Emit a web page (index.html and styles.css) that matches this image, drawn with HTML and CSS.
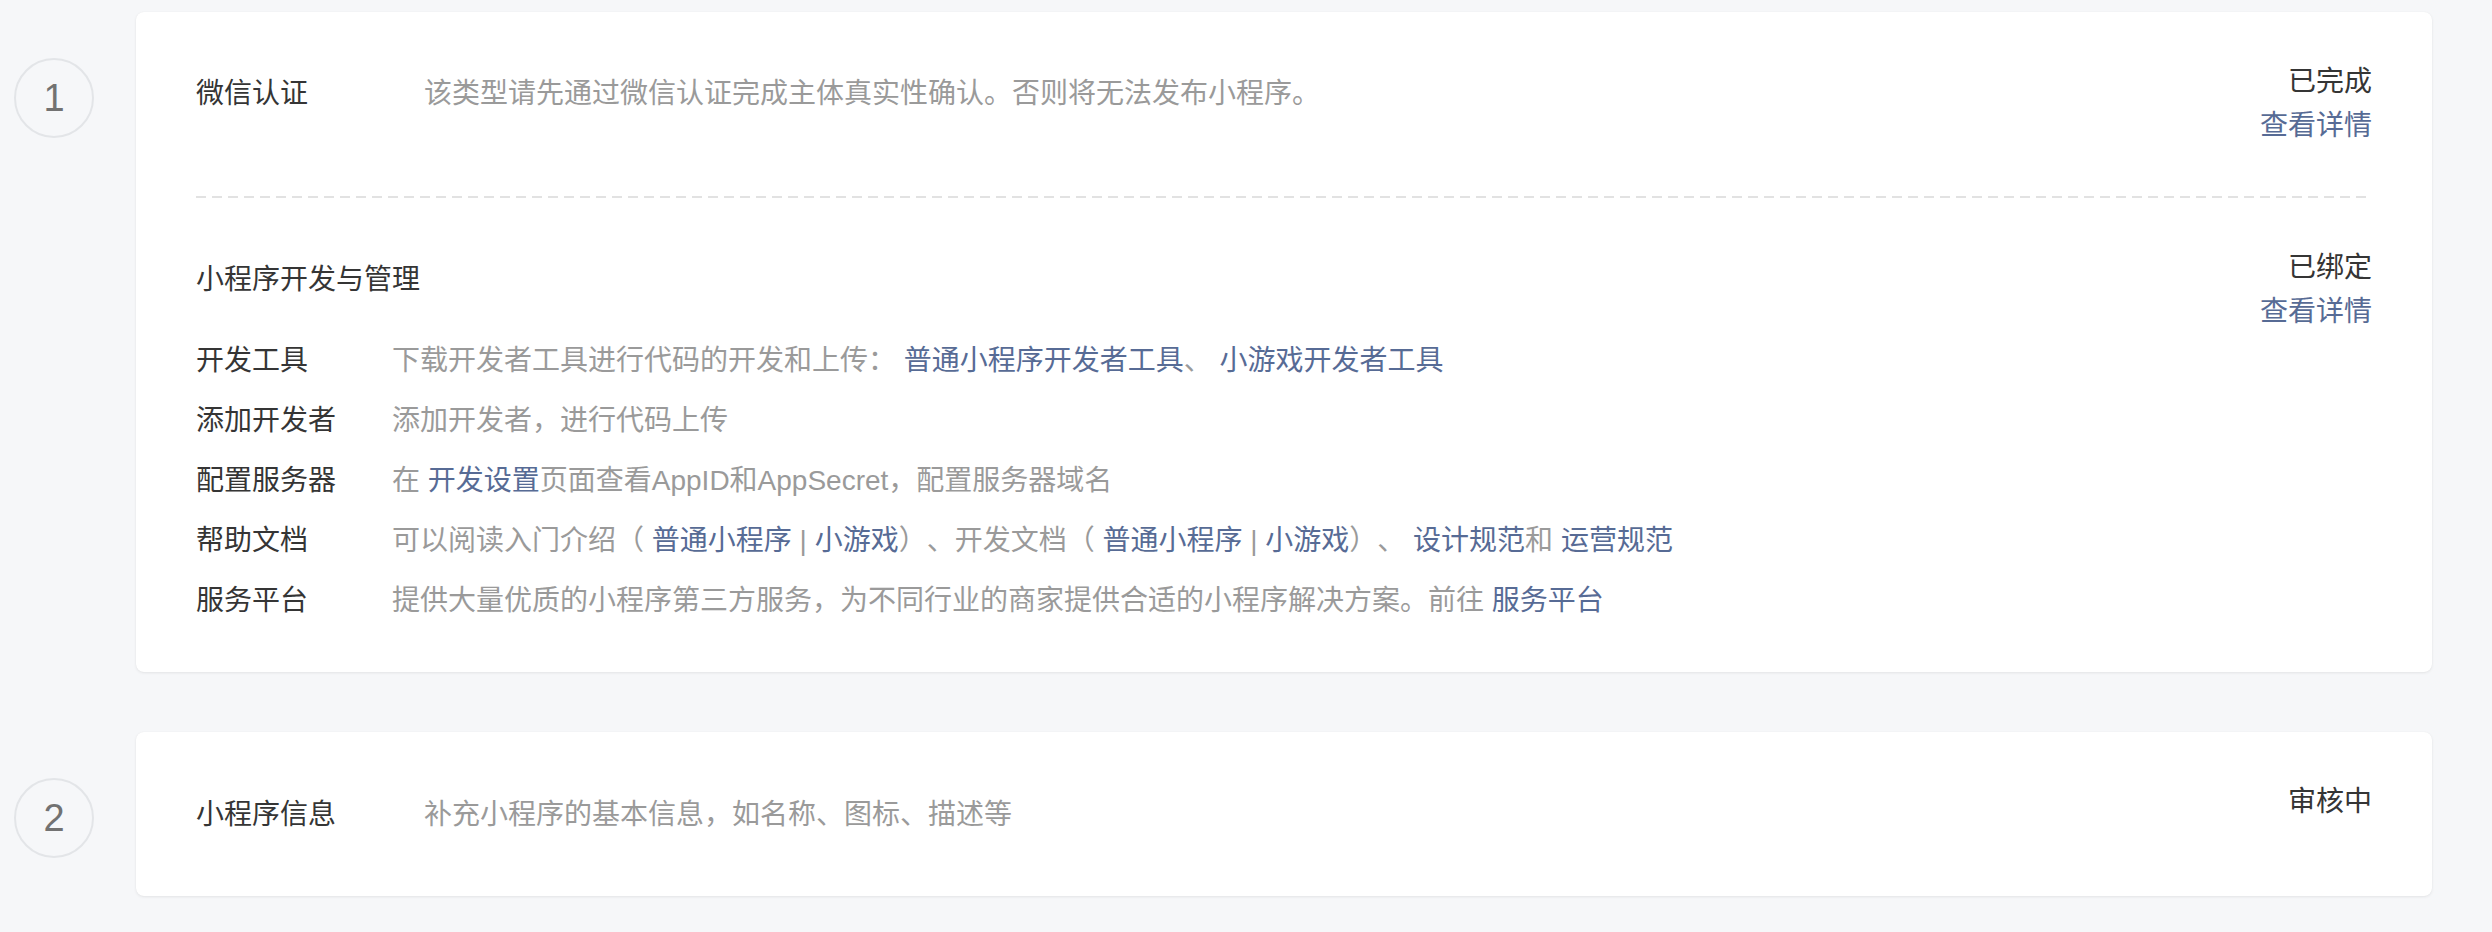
FILE: index.html
```html
<!DOCTYPE html>
<html lang="zh-CN">
<head>
<meta charset="utf-8">
<title>小程序发布流程</title>
<link rel="stylesheet" href="styles.css">
</head>
<body>
<div class="page">
  <div class="step">
    <div class="step-num">1</div>
    <div class="card">
      <div class="section">
        <div class="sec-head">
          <div class="sec-title">微信认证</div>
          <div class="sec-desc">该类型请先通过微信认证完成主体真实性确认。否则将无法发布小程序。</div>
          <div class="sec-status">
            <div class="status">已完成</div>
            <a class="link">查看详情</a>
          </div>
        </div>
      </div>
      <div class="divider"></div>
      <div class="section">
        <div class="sec-head">
          <div class="sec-title">小程序开发与管理</div>
          <div class="sec-status">
            <div class="status">已绑定</div>
            <a class="link">查看详情</a>
          </div>
        </div>
        <div class="rows">
          <div class="row">
            <div class="row-label">开发工具</div>
            <div class="row-desc">下载开发者工具进行代码的开发和上传： <a class="link">普通小程序开发者工具</a>、 <a class="link">小游戏开发者工具</a></div>
          </div>
          <div class="row">
            <div class="row-label">添加开发者</div>
            <div class="row-desc">添加开发者，进行代码上传</div>
          </div>
          <div class="row">
            <div class="row-label">配置服务器</div>
            <div class="row-desc">在 <a class="link">开发设置</a>页面查看AppID和AppSecret，配置服务器域名</div>
          </div>
          <div class="row">
            <div class="row-label">帮助文档</div>
            <div class="row-desc">可以阅读入门介绍（ <a class="link">普通小程序</a> | <a class="link">小游戏</a>）、开发文档（ <a class="link">普通小程序</a> | <a class="link">小游戏</a>）、 <a class="link">设计规范</a>和 <a class="link">运营规范</a></div>
          </div>
          <div class="row">
            <div class="row-label">服务平台</div>
            <div class="row-desc">提供大量优质的小程序第三方服务，为不同行业的商家提供合适的小程序解决方案。前往 <a class="link">服务平台</a></div>
          </div>
        </div>
      </div>
    </div>
  </div>

  <div class="step">
    <div class="step-num">2</div>
    <div class="card card-single">
      <div class="sec-head">
        <div class="sec-title sec-title-2">小程序信息</div>
        <div class="sec-desc sec-title-2">补充小程序的基本信息，如名称、图标、描述等</div>
        <div class="sec-status">
          <div class="status">审核中</div>
        </div>
      </div>
    </div>
  </div>
</div>
</body>
</html>
```

FILE: styles.css
```css
html, body {
  margin: 0;
  padding: 0;
  background: #f6f7f9;
}

body {
  font-family: "Liberation Sans", "Noto Sans CJK SC", sans-serif;
  font-size: 28px;
  line-height: 44px;
  color: #353535;
  text-spacing-trim: space-all;
}

.page {
  padding: 12px 60px 36px 14px;
}

.step {
  display: flex;
  align-items: flex-start;
  gap: 42px;
  margin-bottom: 60px;
}

.step:last-child {
  margin-bottom: 0;
}

.step-num {
  flex: none;
  box-sizing: border-box;
  width: 80px;
  height: 80px;
  margin-top: 46px;
  border: 2px solid #e3e5e8;
  border-radius: 50%;
  display: flex;
  align-items: center;
  justify-content: center;
  font-family: "Liberation Sans", sans-serif;
  font-size: 38px;
  color: #727272;
  line-height: 1;
}

.card {
  flex: 1;
  background: #fff;
  border-radius: 8px;
  box-shadow: 0 1px 3px rgba(0, 0, 0, 0.08), 0 0 1px rgba(0, 0, 0, 0.05);
  padding: 0 60px 1px;
}

.section {
  padding-top: 48px;
  padding-bottom: 48px;
}

.card-single {
  padding-top: 48px;
  padding-bottom: 59px;
}

.divider {
  height: 2px;
  background: repeating-linear-gradient(to right, #e2e2e2 0 10px, transparent 10px 16px);
}

.sec-head {
  display: flex;
  align-items: flex-start;
}

.sec-title {
  flex: none;
  width: 228px;
  margin-top: 12px;
  color: #353535;
}

.sec-desc {
  flex: 1;
  margin-top: 12px;
  color: #9a9a9a;
}

.sec-title-2 {
  margin-top: 13px;
}

.sec-head .sec-title + .sec-status {
  margin-left: auto;
}

.sec-status {
  flex: none;
  text-align: right;
  display: flex;
  flex-direction: column;
  align-items: flex-end;
}

.status {
  color: #353535;
}

.link {
  color: #576b95;
  text-decoration: none;
  cursor: pointer;
}

.rows {
  margin-top: 5px;
  display: flex;
  flex-direction: column;
  gap: 16px;
}

.row {
  display: flex;
}

.row-label {
  flex: none;
  width: 196px;
  color: #353535;
}

.row-desc {
  flex: 1;
  color: #9a9a9a;
}
```
